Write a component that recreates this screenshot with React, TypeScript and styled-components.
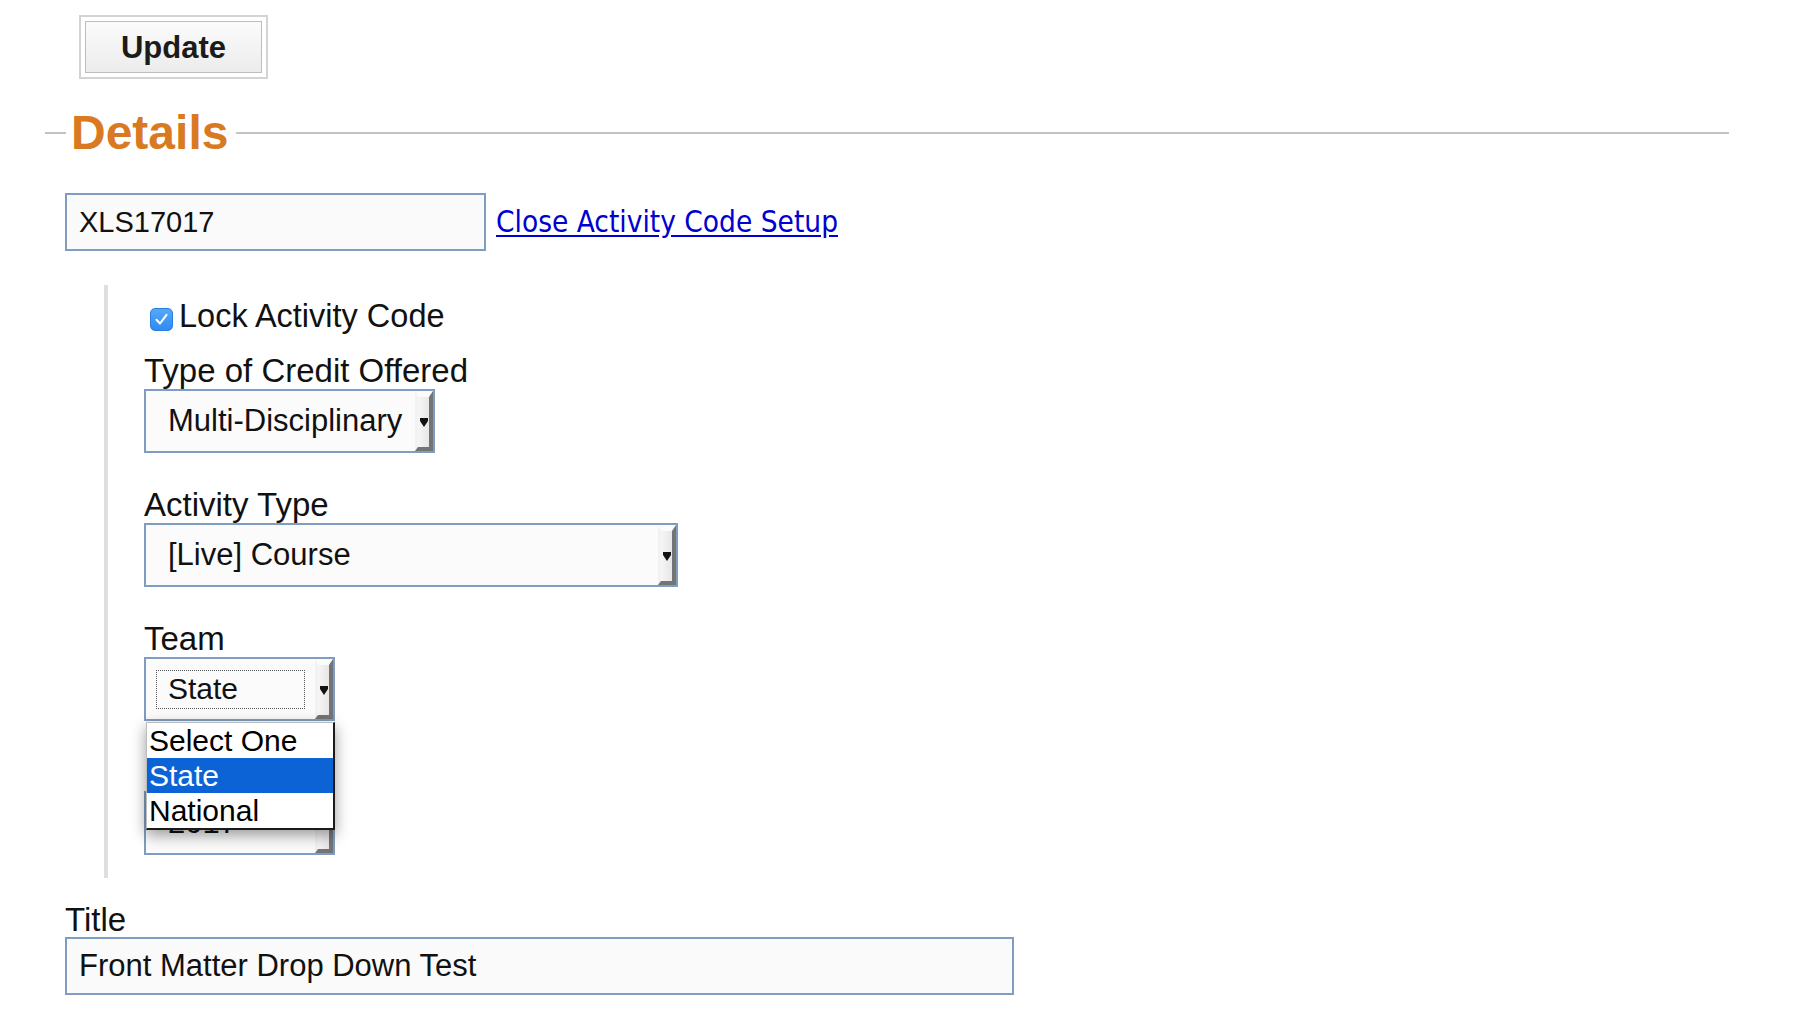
import React from 'react';
import styled, { createGlobalStyle } from 'styled-components';

// ---------------------------------------------------------------------------
// Global
// ---------------------------------------------------------------------------

const GlobalStyle = createGlobalStyle`
  body {
    margin: 0;
    background: #ffffff;
    color: #111111;
    font-family: 'Liberation Sans', Arial, Helvetica, sans-serif;
  }
  * { box-sizing: border-box; }
`;

// ---------------------------------------------------------------------------
// Styled components
// ---------------------------------------------------------------------------

const Page = styled.div`
  width: 1729px;
  padding: 21px 0 40px 45px;
`;

const Toolbar = styled.div`
  padding-left: 40px;
`;

const UpdateButton = styled.button`
  display: block;
  width: 177px;
  height: 52px;
  padding: 1px 0 0;
  border: 1px solid #bdbdbd;
  background: linear-gradient(#fbfbfb, #ececec);
  outline: 2px solid #d3d3d3;
  outline-offset: 4px;
  font-family: 'Liberation Sans', Arial, sans-serif;
  font-size: 31px;
  font-weight: bold;
  color: #1b1b1b;
`;

const SectionHeader = styled.div`
  display: flex;
  align-items: center;
  height: 53px;
  margin-top: 33px;
  &::before {
    content: '';
    width: 21px;
    border-top: 2px solid #c3c3c3;
  }
  &::after {
    content: '';
    flex: 1;
    border-top: 2px solid #c3c3c3;
  }
`;

const Heading = styled.h2`
  margin: 0 8px 0 5px;
  font-size: 48px;
  line-height: 53px;
  font-weight: bold;
  color: #d97a22;
`;

const Body = styled.div`
  padding-left: 20px;
`;

const CodeRow = styled.div`
  display: flex;
  align-items: center;
  gap: 10px;
  margin-top: 34px;
`;

const TextInput = styled.input<{ $width: number; $size: number }>`
  width: ${p => p.$width}px;
  height: 58px;
  padding: 0 12px;
  border: 2px solid #7f9dc1;
  background: #fafafa;
  font-family: 'Liberation Sans', Arial, sans-serif;
  font-size: ${p => p.$size}px;
  color: #111;
  outline: none;
`;

const SetupLink = styled.a`
  font-family: 'DejaVu Sans Condensed', 'DejaVu Sans', Verdana, sans-serif;
  font-stretch: condensed;
  font-size: 29.5px;
  color: #0000d0;
  text-decoration: underline;
  text-underline-offset: 3px;
`;

const Indent = styled.div`
  margin: 34px 0 0 39px;
  padding: 13px 0 23px 36px;
  border-left: 4px solid #dedede;
`;

const CheckRow = styled.label`
  display: flex;
  align-items: center;
  gap: 6px;
  height: 36px;
  margin-bottom: 18px;
  padding-left: 6px;
  font-size: 32.5px;
  line-height: 32px;
`;

const CheckBox = styled.span`
  display: inline-flex;
  align-items: center;
  justify-content: center;
  width: 23px;
  height: 23px;
  margin-top: 6px;
  border-radius: 5px;
  background: linear-gradient(#55a9fb, #2f8bf2);
  border: 1px solid #2a7fe0;
`;

const Field = styled.div`
  margin-bottom: 33px;
  &:last-child {
    margin-bottom: 0;
  }
`;

const FieldLabel = styled.div<{ $line?: number }>`
  font-size: 33px;
  line-height: ${p => p.$line ?? 37}px;
  color: #111;
`;

const SelectWrap = styled.div<{ $width: number }>`
  position: relative;
  width: ${p => p.$width}px;
`;

const SelectBox = styled.div`
  display: flex;
  align-items: center;
  height: 64px;
  border: 2px solid #7f9dc1;
  background: #fbfbfb;
  font-size: 31px;
  white-space: nowrap;
`;

const SelectValue = styled.span`
  flex: 1;
  padding-left: 22px;
  overflow: hidden;
`;

const FocusRing = styled.span`
  display: flex;
  align-items: center;
  flex: 1;
  height: 39px;
  margin: 0 10px;
  padding-left: 11px;
  border: 1px dotted #555;
  font-size: 30px;
`;

const SelectButton = styled.span`
  display: flex;
  align-items: center;
  justify-content: center;
  align-self: stretch;
  width: 18px;
  border-style: solid;
  border-width: 6px 4px 4px 3px;
  border-color: #fbfbfb #747474 #747474 #f2f2f2;
  background: linear-gradient(to right, #f6f6f6, #e6e6e6);
`;

const OptionList = styled.div`
  position: absolute;
  top: 100%;
  left: 2px;
  right: 0;
  margin-top: 1px;
  z-index: 2;
  background: #ffffff;
  border-top: 1px solid #bdbdbd;
  border-left: 1px solid #bdbdbd;
  border-right: 2px solid #1a1a1a;
  border-bottom: 2px solid #1a1a1a;
  box-shadow: 0 5px 14px rgba(0, 0, 0, 0.4);
`;

const OptionItem = styled.div<{ $selected?: boolean }>`
  height: 35px;
  line-height: 35px;
  padding-left: 2px;
  font-size: 30px;
  color: ${p => (p.$selected ? '#ffffff' : '#000000')};
  background: ${p => (p.$selected ? '#0b63d6' : 'transparent')};
  white-space: nowrap;
`;

const TitleField = styled.div`
  margin-top: 24px;
`;

// ---------------------------------------------------------------------------
// Pieces
// ---------------------------------------------------------------------------

const Arrow = () => (
  <svg width="8" height="9" viewBox="0 0 8 9">
    <polygon points="0,0 8,0 8,3 4,9 0,3" fill="#111" />
  </svg>
);

const Check = () => (
  <svg width="17" height="17" viewBox="0 0 17 17">
    <path d="M3.5 8.8 L7 12.5 L13.5 3.8" fill="none" stroke="#fff" strokeWidth="2" strokeLinecap="round" strokeLinejoin="round" />
  </svg>
);

interface FakeSelectProps {
  width: number;
  value: string;
  focused?: boolean;
  options?: string[];
}

const FakeSelect: React.FC<FakeSelectProps> = ({ width, value, focused, options }) => (
  <SelectWrap $width={width}>
    <SelectBox>
      {focused ? <FocusRing>{value}</FocusRing> : <SelectValue>{value}</SelectValue>}
      <SelectButton><Arrow /></SelectButton>
    </SelectBox>
    {options && (
      <OptionList>
        {options.map(o => (
          <OptionItem key={o} $selected={o === value}>{o}</OptionItem>
        ))}
      </OptionList>
    )}
  </SelectWrap>
);

// ---------------------------------------------------------------------------
// App
// ---------------------------------------------------------------------------

export default function App() {
  return (
    <>
      <GlobalStyle />
      <Page>
        <Toolbar>
          <UpdateButton type="button">Update</UpdateButton>
        </Toolbar>

        <SectionHeader>
          <Heading>Details</Heading>
        </SectionHeader>

        <Body>
          <CodeRow>
            <TextInput $width={421} $size={29} defaultValue="XLS17017" />
            <SetupLink href="#">Close Activity Code Setup</SetupLink>
          </CodeRow>

          <Indent>
            <CheckRow>
              <CheckBox><Check /></CheckBox>
              Lock Activity Code
            </CheckRow>

            <Field>
              <FieldLabel>Type of Credit Offered</FieldLabel>
              <FakeSelect width={291} value="Multi-Disciplinary" />
            </Field>

            <Field>
              <FieldLabel>Activity Type</FieldLabel>
              <FakeSelect width={534} value="[Live] Course" />
            </Field>

            <Field>
              <FieldLabel>Team</FieldLabel>
              <FakeSelect width={191} value="State" focused options={['Select One', 'State', 'National']} />
            </Field>

            {/* field whose label sits under the open team list */}
            <Field>
              <FieldLabel>&nbsp;</FieldLabel>
              <FakeSelect width={191} value="2017" />
            </Field>
          </Indent>

          <TitleField>
            <FieldLabel $line={35}>Title</FieldLabel>
            <TextInput $width={949} $size={31} defaultValue="Front Matter Drop Down Test" />
          </TitleField>
        </Body>
      </Page>
    </>
  );
}
